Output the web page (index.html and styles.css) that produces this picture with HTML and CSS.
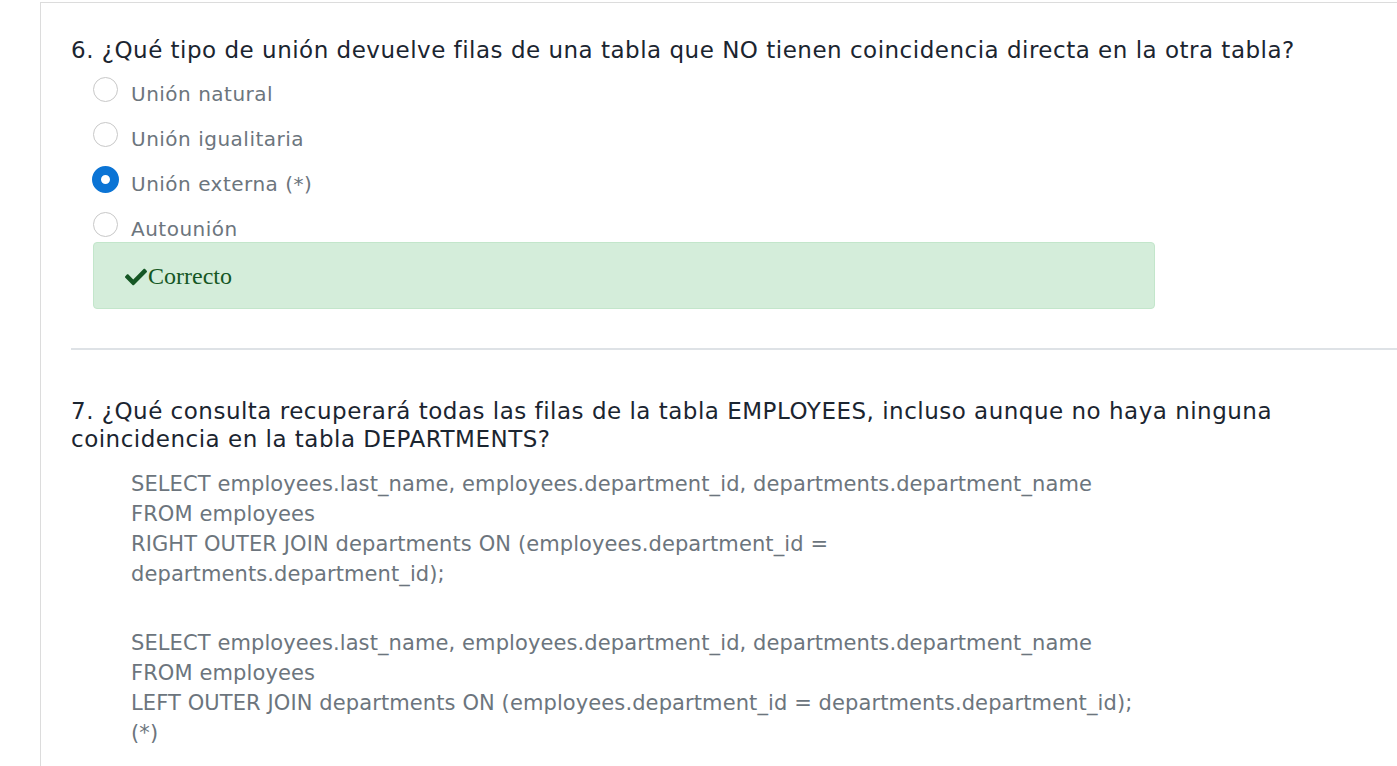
FILE: index.html
```html
<!DOCTYPE html>
<html lang="es">
<head>
<meta charset="utf-8">
<link rel="stylesheet" href="styles.css">
</head>
<body>
<div class="page">
  <div class="q">
    <div class="qtitle">6. ¿Qué tipo de unión devuelve filas de una tabla que NO tienen coincidencia directa en la otra tabla?</div>
    <div class="opts">
      <div class="opt"><span class="radio"></span><span class="lbl">Unión natural</span></div>
      <div class="opt"><span class="radio"></span><span class="lbl">Unión igualitaria</span></div>
      <div class="opt"><span class="radio on"></span><span class="lbl">Unión externa (*)</span></div>
      <div class="opt"><span class="radio"></span><span class="lbl">Autounión</span></div>
    </div>
    <div class="ok">
      <svg class="check" viewBox="0 0 512 512" width="22" height="22"><path fill="#155724" d="M173.9 439.4l-166.4-166.4c-10-10-10-26.2 0-36.2l36.2-36.2c10-10 26.2-10 36.2 0L192 312.7 432.1 72.6c10-10 26.2-10 36.2 0l36.2 36.2c10 10 10 26.2 0 36.2l-294.4 294.4c-10 10-26.2 10-36.2 0z"/></svg><span>Correcto</span>
    </div>
  </div>
  <hr class="sep">
  <div class="q q7">
    <div class="qtitle">7. ¿Qué consulta recuperará todas las filas de la tabla EMPLOYEES, incluso aunque no haya ninguna coincidencia en la tabla DEPARTMENTS?</div>
    <div class="sql">SELECT employees.last_name, employees.department_id, departments.department_name<br>FROM employees<br>RIGHT OUTER JOIN departments ON (employees.department_id =<br>departments.department_id);</div>
    <div class="sql">SELECT employees.last_name, employees.department_id, departments.department_name<br>FROM employees<br>LEFT OUTER JOIN departments ON (employees.department_id = departments.department_id);<br>(*)</div>
  </div>
</div>
</body>
</html>
```
FILE: styles.css
```css
html, body {
  margin: 0;
  padding: 0;
  background: #fff;
  overflow: hidden;
}
.page {
  margin-left: 40px;
  border-left: 1px solid #dcdcdc;
  border-top: 1px solid #dcdcdc;
  margin-top: 2px;
  height: 780px;
  padding-left: 30px;
}
.q {
  padding-top: 33px;
}
.qtitle {
  font-family: "DejaVu Sans", Verdana, sans-serif;
  font-size: 23px;
  letter-spacing: 0.5px;
  line-height: 28px;
  color: #1b2530;
  width: 1300px;
}
.opts {
  margin-left: 22px;
  margin-top: 7px;
  display: flex;
  flex-direction: column;
}
.opt {
  display: flex;
  align-items: center;
  height: 45px;
}
.radio {
  box-sizing: border-box;
  width: 25px;
  height: 25px;
  border-radius: 50%;
  border: 1px solid #c8c8c8;
  margin-right: 13px;
  margin-top: -8px;
  background: #fff;
}
.radio.on {
  width: 27px;
  height: 27px;
  margin-left: -1px;
  margin-right: 12px;
  border: 9px solid #0b74d5;
}
.lbl {
  font-family: "DejaVu Sans", Verdana, sans-serif;
  font-size: 20px;
  letter-spacing: 0.5px;
  color: #6c757d;
}
.ok {
  margin-left: 22px;
  margin-top: -9px;
  width: 1062px;
  height: 67px;
  box-sizing: border-box;
  background: #d4edda;
  border: 1px solid #c3e6cb;
  border-radius: 4px;
  display: flex;
  align-items: center;
  padding-left: 31px;
  padding-top: 2px;
  font-family: "Liberation Serif", serif;
  font-size: 24px;
  color: #155724;
}
.check { margin-right: 1px; }
.sep {
  border: none;
  border-top: 2px solid #dee2e6;
  margin: 39px 0 0 0;
}
.q7 { padding-top: 47px; }
.sql {
  margin-left: 60px;
  margin-top: 16px;
  font-family: "DejaVu Sans", Verdana, sans-serif;
  font-size: 21px;
  letter-spacing: 0.1px;
  line-height: 30px;
  color: #6c757d;
}
.sql + .sql { margin-top: 39px; }
```
